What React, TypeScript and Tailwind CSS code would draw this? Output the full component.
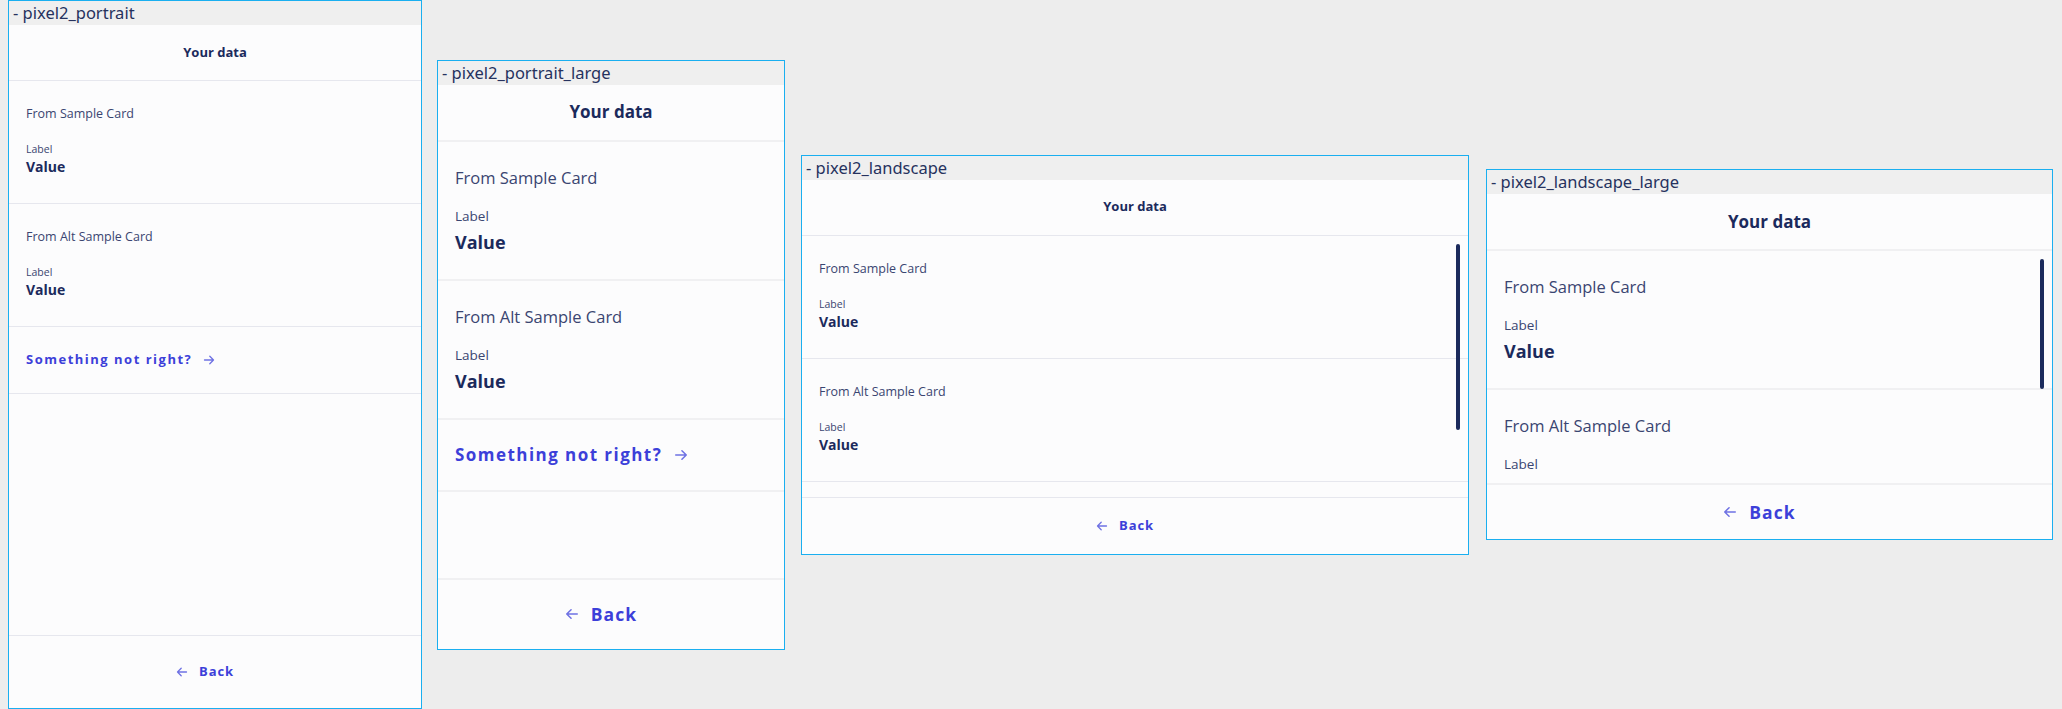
import React from "react";

type Size = "sm" | "lg";

const FONT = { fontFamily: '"Open Sans", "Noto Sans", sans-serif' };

function ArrowRight({ size }: { size: Size }) {
  const s = size === "sm" ? 12 : 14;
  return (
    <svg width={s} height={s} viewBox="0 0 12 12" fill="none" stroke="#6e71e3" strokeWidth="1.3" strokeLinecap="round" strokeLinejoin="round">
      <path d="M1.5 6h9M6.8 2.3 10.5 6 6.8 9.7" />
    </svg>
  );
}

function ArrowLeft({ size }: { size: Size }) {
  const s = size === "sm" ? 12 : 14;
  return (
    <svg width={s} height={s} viewBox="0 0 12 12" fill="none" stroke="#6e71e3" strokeWidth="1.3" strokeLinecap="round" strokeLinejoin="round">
      <path d="M10.5 6h-9M5.2 2.3 1.5 6l3.7 3.7" />
    </svg>
  );
}

function Section({ size, title }: { size: Size; title: string }) {
  if (size === "sm") {
    return (
      <div className="shrink-0 border-b border-[#e6e7ee] px-[17px] pt-6 pb-[26px]">
        <div className="h-[18px] text-[12.5px] leading-[18px] text-[#3a4571]">{title}</div>
        <div className="mt-[18px] h-4 text-[10.5px] leading-4 text-[#3a4571]">Label</div>
        <div className="h-5 text-[14px] font-bold leading-5 text-[#1b2a5c]">Value</div>
      </div>
    );
  }
  return (
    <div className="shrink-0 border-b-2 border-[#f0f0f2] px-[17px] pt-6 pb-[25px]">
      <div className="h-6 text-[16.5px] leading-6 text-[#3a4571]">{title}</div>
      <div className="mt-[17px] h-[18px] text-[13.5px] leading-[18px] text-[#3a4571]">Label</div>
      <div className="mt-[5px] h-6 text-[18px] font-bold leading-6 text-[#1b2a5c]">Value</div>
    </div>
  );
}

function LinkRow({ size }: { size: Size }) {
  if (size === "sm") {
    return (
      <div className="flex h-[67px] shrink-0 items-center gap-[11px] border-b border-[#e6e7ee] px-[17px]">
        <span className="text-[13px] font-bold tracking-[1.5px] text-[#3c3fd9]">Something not right?</span>
        <ArrowRight size="sm" />
      </div>
    );
  }
  return (
    <div className="flex h-[72px] shrink-0 items-center gap-[12px] border-b-2 border-[#f0f0f2] px-[17px]">
      <span className="text-[17px] font-bold tracking-[1.45px] text-[#3c3fd9]">Something not right?</span>
      <ArrowRight size="lg" />
    </div>
  );
}

function Header({ size }: { size: Size }) {
  return size === "sm" ? (
    <div className="flex h-[56px] shrink-0 items-center justify-center border-b border-[#e6e7ee] text-[13px] font-bold text-[#1b2a5c]">
      Your data
    </div>
  ) : (
    <div className="flex h-[57px] shrink-0 items-center justify-center border-b-2 border-[#f0f0f2] text-[17px] font-bold text-[#1b2a5c]">
      Your data
    </div>
  );
}

function Footer({ size, h }: { size: Size; h: string }) {
  return size === "sm" ? (
    <div className={`flex shrink-0 items-center justify-center gap-[11px] border-t border-[#e6e7ee] pr-5 ${h}`}>
      <ArrowLeft size="sm" />
      <span className="text-[13px] font-bold tracking-[0.9px] text-[#3c3fd9]">Back</span>
    </div>
  ) : (
    <div className={`flex shrink-0 items-center justify-center gap-[12px] border-t-2 border-[#f0f0f2] pr-5 ${h}`}>
      <ArrowLeft size="lg" />
      <span className="text-[17.5px] font-bold tracking-[1.1px] text-[#3c3fd9]">Back</span>
    </div>
  );
}

function TitleBar({ name }: { name: string }) {
  return (
    <div className="flex h-6 shrink-0 items-center bg-[#efefef] pl-1 text-[16.5px] leading-6 text-[#26325e]" style={{ fontFamily: '"Noto Sans", sans-serif' }}>
      - {name}
    </div>
  );
}

function PortraitFrame({ name, size, w, h, footerH }: { name: string; size: Size; w: string; h: string; footerH: string }) {
  return (
    <div className={`flex shrink-0 flex-col border border-[#1aaff0] bg-[#fcfcfd] ${w} ${h}`} style={FONT}>
      <TitleBar name={name} />
      <Header size={size} />
      <Section size={size} title="From Sample Card" />
      <Section size={size} title="From Alt Sample Card" />
      <LinkRow size={size} />
      <div className="flex-1" />
      <Footer size={size} h={footerH} />
    </div>
  );
}

function LandscapeFrame({ name, size, w, h, footerH, barTop, barH }: { name: string; size: Size; w: string; h: string; footerH: string; barTop: string; barH: string }) {
  return (
    <div className={`flex shrink-0 flex-col border border-[#1aaff0] bg-[#fcfcfd] ${w} ${h}`} style={FONT}>
      <TitleBar name={name} />
      <Header size={size} />
      <div className="relative min-h-0 flex-1 overflow-hidden">
        <div className="flex flex-col">
          <Section size={size} title="From Sample Card" />
          <Section size={size} title="From Alt Sample Card" />
          <LinkRow size={size} />
        </div>
        <div className={`absolute right-[8px] w-1 rounded-full bg-[#1b2a5c] ${barTop} ${barH}`} />
      </div>
      <Footer size={size} h={footerH} />
    </div>
  );
}

export default function App() {
  return (
    <div className="flex h-[709px] w-[2062px] items-center gap-[15px] bg-[#ededed] pl-2">
      <PortraitFrame name="pixel2_portrait" size="sm" w="w-[414px]" h="h-[709px]" footerH="h-[73px]" />
      <PortraitFrame name="pixel2_portrait_large" size="lg" w="w-[348px]" h="h-[590px]" footerH="h-[71px]" />
      <div className="ml-px">
        <LandscapeFrame name="pixel2_landscape" size="sm" w="w-[668px]" h="h-[400px]" footerH="h-[57px]" barTop="top-2" barH="h-[186px]" />
      </div>
      <div className="ml-[2px]">
        <LandscapeFrame name="pixel2_landscape_large" size="lg" w="w-[567px]" h="h-[371px]" footerH="h-[56px]" barTop="top-[8px]" barH="h-[130px]" />
      </div>
    </div>
  );
}
